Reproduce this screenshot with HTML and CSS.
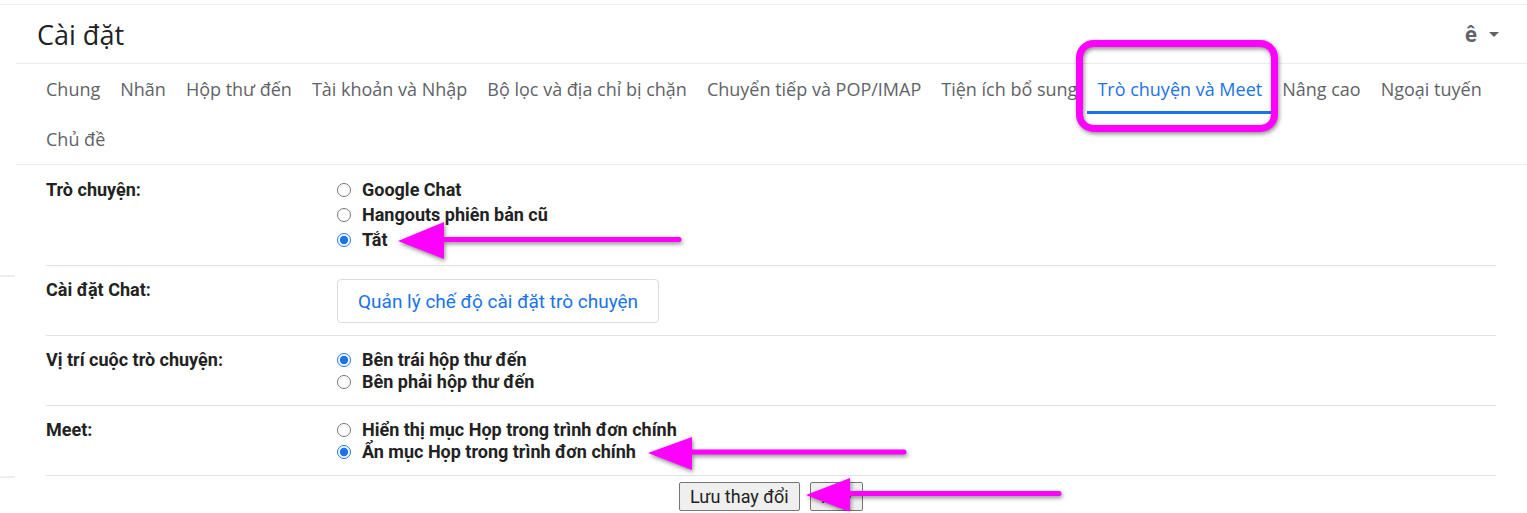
FILE: index.html
```html
<!DOCTYPE html>
<html lang="vi">
<head>
    <meta charset="UTF-8">
    <title>Cài đặt</title>
    <link rel="stylesheet" href="styles.css">
</head>
<body>
    <div class="page">
        <div class="edge">
            <div class="edge-line first"></div>
            <div class="edge-line second"></div>
        </div>
        <div class="main">
            <div class="header">
                <h1>Cài đặt</h1>
                <div class="lang">ê <span class="caret"></span></div>
            </div>
            <nav class="tabs">
                <a class="tab">Chung</a>
                <a class="tab">Nhãn</a>
                <a class="tab">Hộp thư đến</a>
                <a class="tab">Tài khoản và Nhập</a>
                <a class="tab">Bộ lọc và địa chỉ bị chặn</a>
                <a class="tab">Chuyển tiếp và POP/IMAP</a>
                <a class="tab">Tiện ích bổ sung</a>
                <a class="tab active">Trò chuyện và Meet</a>
                <a class="tab">Nâng cao</a>
                <a class="tab">Ngoại tuyến</a>
                <a class="tab">Chủ đề</a>
            </nav>
            <div class="settings">
                <div class="row row-chat">
                    <div class="label">Trò chuyện:</div>
                    <div class="options">
                        <label class="opt"><input type="radio" name="chat"> Google Chat</label>
                        <label class="opt"><input type="radio" name="chat"> Hangouts phiên bản cũ</label>
                        <label class="opt"><input type="radio" name="chat" checked> Tắt</label>
                    </div>
                </div>
                <div class="row row-btn">
                    <div class="label">Cài đặt Chat:</div>
                    <div class="options">
                        <button class="link-btn">Quản lý chế độ cài đặt trò chuyện</button>
                    </div>
                </div>
                <div class="row">
                    <div class="label">Vị trí cuộc trò chuyện:</div>
                    <div class="options">
                        <label class="opt"><input type="radio" name="pos" checked> Bên trái hộp thư đến</label>
                        <label class="opt"><input type="radio" name="pos"> Bên phải hộp thư đến</label>
                    </div>
                </div>
                <div class="row">
                    <div class="label">Meet:</div>
                    <div class="options">
                        <label class="opt"><input type="radio" name="meet"> Hiển thị mục Họp trong trình đơn chính</label>
                        <label class="opt"><input type="radio" name="meet" checked> Ẩn mục Họp trong trình đơn chính</label>
                    </div>
                </div>
                <div class="actions">
                    <button class="plain-btn">Lưu thay đổi</button>
                    <button class="plain-btn">Hủy</button>
                </div>
            </div>
        </div>
    </div>

    <!-- magenta markup drawn over the screenshot -->
    <svg class="marks" width="1527" height="513" viewBox="0 0 1527 513">
        <rect x="1079.5" y="43.5" width="195" height="85" rx="14" fill="none" stroke="#ff00ff" stroke-width="7"/>
        <g fill="#ff00ff" stroke="#ff00ff" stroke-linecap="round">
            <line x1="440" y1="239.5" x2="679" y2="239.5" stroke-width="5"/>
            <polygon points="398,241 444,222 444,259" stroke="none"/>
            <line x1="690" y1="452" x2="904" y2="452" stroke-width="5"/>
            <polygon points="648,453 692,437 692,470" stroke="none"/>
            <line x1="846" y1="493.5" x2="1059" y2="493.5" stroke-width="5"/>
            <polygon points="806,495 850,478 850,512" stroke="none"/>
        </g>
    </svg>
</body>
</html>
```

FILE: styles.css
```css
* {
    box-sizing: border-box;
}
body {
    margin: 0;
    background: #fff;
    color: #202124;
    font-family: Roboto, "Liberation Sans", sans-serif;
    border-top: 1px solid #edf0f2;
    margin-top: 4px;
    position: relative;
}
.page {
    display: flex;
}
.edge {
    width: 16px;
    flex: none;
}
.edge-line {
    height: 2px;
    width: 15px;
    background: #eeeeee;
}
.edge-line.first {
    margin-top: 270px;
}
.edge-line.second {
    margin-top: 199px;
}
.main {
    flex: 1;
}
.header {
    height: 59px;
    display: flex;
    align-items: center;
    justify-content: space-between;
    padding: 0 28px 0 21px;
    border-bottom: 1px solid #e8ecee;
}
h1 {
    margin: 0;
    font-family: "Open Sans", sans-serif;
    font-weight: 400;
    font-size: 27px;
    color: #202124;
}
.lang {
    font-size: 22px;
    font-weight: 700;
    color: #5f6368;
    display: flex;
    align-items: center;
    gap: 12px;
}
.caret {
    width: 0;
    height: 0;
    border-left: 5px solid transparent;
    border-right: 5px solid transparent;
    border-top: 5px solid #5f6368;
}
.tabs {
    display: flex;
    flex-wrap: wrap;
    padding: 0 30px 0 20px;
    border-bottom: 1px solid #e8ecee;
}
.tab {
    height: 50px;
    padding: 3px 10px 0;
    display: flex;
    align-items: center;
    font-family: "Open Sans", sans-serif;
    font-size: 18px;
    color: #5f6368;
    border-bottom: 3px solid transparent;
}
.tab.active {
    color: #1a73e8;
    border-bottom-color: #1a73e8;
}
.settings {
    margin: 0 31px 0 30px;
}
.row {
    display: flex;
    border-bottom: 1px solid #e2e2e2;
    padding: 13px 0 12px;
    min-height: 70px;
}
.label {
    width: 291px;
    flex: none;
    font-size: 18px;
    font-weight: 700;
    color: #222;
    line-height: 22px;
}
.options {
    display: flex;
    flex-direction: column;
}
.opt {
    display: flex;
    align-items: center;
    font-size: 18px;
    font-weight: 700;
    color: #222;
    line-height: 22px;
}
.row-chat .opt {
    line-height: 25px;
}
.row-chat {
    padding-top: 12px;
    padding-bottom: 13px;
}
.row-chat .label {
    padding-top: 2px;
}
.opt input {
    margin: 0 11px 0 0;
    width: 14px;
    height: 14px;
    accent-color: #1a73e8;
}
.row-btn {
    padding-top: 13px;
    padding-bottom: 12px;
}
.link-btn {
    height: 44px;
    padding: 0 20px;
    background: #fff;
    border: 1px solid #dadce0;
    border-radius: 4px;
    color: #1a73e8;
    font-family: Roboto, sans-serif;
    font-size: 19px;
}
.actions {
    display: flex;
    justify-content: center;
    gap: 10px;
    padding-top: 6px;
}
.plain-btn {
    height: 29px;
    padding: 0 10px;
    background: #efefef;
    border: 1px solid #767676;
    border-radius: 2px;
    font-family: Roboto, sans-serif;
    font-size: 18px;
    color: #222;
}
.marks {
    position: absolute;
    left: 0;
    top: -5px;
    filter: drop-shadow(1px 2px 2px rgba(0, 0, 0, 0.45));
    pointer-events: none;
}
```
